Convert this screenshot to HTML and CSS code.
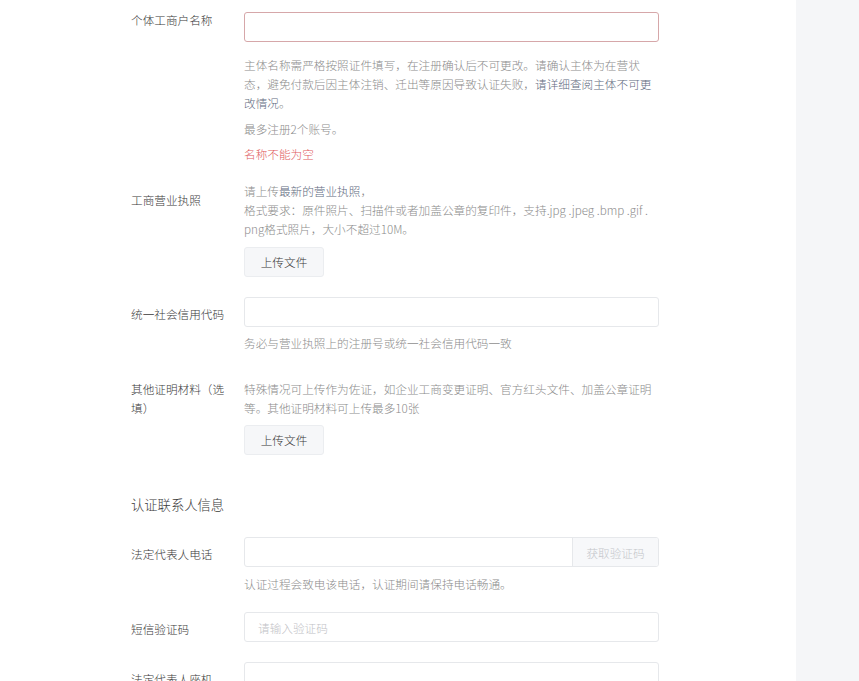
FILE: index.html
```html
<!DOCTYPE html>
<html lang="zh-CN">
<head>
<meta charset="utf-8">
<title>认证信息</title>
<link rel="stylesheet" href="styles.css">
</head>
<body>
<div class="page">
  <main class="main">
    <div class="row row-name">
      <div class="label label-top">个体工商户名称</div>
      <div class="content">
        <div class="input input-error"></div>
        <p class="help help-first">主体名称需严格按照证件填写，在注册确认后不可更改。请确认主体为在营状态，避免付款后因主体注销、迁出等原因导致认证失败，<span class="link">请详细查阅主体不可更改情况</span>。</p>
        <p class="help help-next">最多注册2个账号。</p>
        <p class="help error">名称不能为空</p>
      </div>
    </div>

    <div class="row row-license">
      <div class="label label-mid">工商营业执照</div>
      <div class="content">
        <p class="help">请上传<span class="link">最新的营业执照</span>，<br>格式要求：原件照片、扫描件或者加盖公章的复印件，支持.jpg .jpeg .bmp .gif .<br>png格式照片，大小不超过10M。</p>
        <button class="btn btn-license" type="button">上传文件</button>
      </div>
    </div>

    <div class="row row-credit">
      <div class="label">统一社会信用代码</div>
      <div class="content">
        <div class="input"></div>
        <p class="help help-under">务必与营业执照上的注册号或统一社会信用代码一致</p>
      </div>
    </div>

    <div class="row row-other">
      <div class="label label-flush">其他证明材料（选填）</div>
      <div class="content">
        <p class="help">特殊情况可上传作为佐证，如企业工商变更证明、官方红头文件、加盖公章证明等。其他证明材料可上传最多10张</p>
        <button class="btn btn-other" type="button">上传文件</button>
      </div>
    </div>

    <h2 class="section-title">认证联系人信息</h2>

    <div class="row row-phone">
      <div class="label">法定代表人电话</div>
      <div class="content">
        <div class="input input-group">
          <span class="input-fill"></span>
          <span class="addon">获取验证码</span>
        </div>
        <p class="help help-under2">认证过程会致电该电话，认证期间请保持电话畅通。</p>
      </div>
    </div>

    <div class="row row-sms">
      <div class="label">短信验证码</div>
      <div class="content">
        <div class="input"><span class="placeholder">请输入验证码</span></div>
      </div>
    </div>

    <div class="row row-landline">
      <div class="label">法定代表人座机</div>
      <div class="content">
        <div class="input"></div>
      </div>
    </div>
  </main>
  <aside class="side"></aside>
</div>
</body>
</html>
```

FILE: styles.css
```css
* { box-sizing: border-box; }

html, body {
  margin: 0;
  padding: 0;
  height: 100%;
  overflow: hidden;
  background: #ffffff;
}

body {
  font-family: "Noto Sans CJK SC", "Noto Sans", "Liberation Sans", sans-serif;
  font-size: 11.65px;
  font-weight: 300;
  line-height: 19px;
  color: #3a3a3a;
}

.page {
  display: flex;
  height: 681px;
}

.main {
  width: 796px;
  flex: none;
  padding: 12px 0 0 131px;
  background: #ffffff;
}

.side {
  flex: 1;
  background: #f5f6f8;
}

.row {
  display: flex;
  align-items: flex-start;
}

.label {
  width: 100px;
  margin-right: 13px;
  flex: none;
  color: #3a3a3a;
  padding-top: 7px;
}

.label-top { padding-top: 0; margin-top: -2px; }
.label-mid { padding-top: 9.5px; }
.label-flush { padding-top: 0; }

.content {
  width: 415px;
  flex: none;
}

.input {
  height: 30px;
  border: 1px solid #e6e8eb;
  border-radius: 3px;
  background: #ffffff;
  display: flex;
  align-items: center;
  padding: 0 13px;
}

.input-error { border-color: #d6a7a9; }

.input-group {
  padding: 0;
  overflow: hidden;
}

.input-fill { flex: 1; }

.addon {
  width: 86px;
  height: 100%;
  flex: none;
  display: flex;
  align-items: center;
  justify-content: center;
  background: #f7f8fa;
  border-left: 1px solid #e6e8eb;
  color: #c4c6ca;
}

.placeholder { color: #bfc2c6; }

.help {
  margin: 0;
  color: #8c8c8c;
}

.help-first { margin-top: 12.5px; }
.help-next { margin-top: 7px; }
.error { color: #e05a5e; margin-top: 6px; }
.help-under { margin-top: 5.5px; }
.help-under2 { margin-top: 6.5px; }

.link { color: #5f6b80; }

.btn {
  display: block;
  width: 80px;
  height: 30px;
  padding: 0;
  border: 1px solid #ebedf0;
  border-radius: 3px;
  background: #f6f7f9;
  color: #3a3a3a;
  font-family: inherit;
  font-size: 11.65px;
  font-weight: 300;
  line-height: 28px;
  text-align: center;
}

.btn-license { margin-top: 9.5px; }
.btn-other { margin-top: 8.5px; }

.row-license { margin-top: 18px; }
.row-credit { margin-top: 20px; }
.row-other { margin-top: 27px; }

.section-title {
  margin: 40px 0 0 0;
  font-size: 13.3px;
  line-height: 20px;
  font-weight: 300;
  color: #3a3a3a;
}

.row-phone { margin-top: 22px; }
.row-sms { margin-top: 19.5px; }
.row-landline { margin-top: 20px; }
```
